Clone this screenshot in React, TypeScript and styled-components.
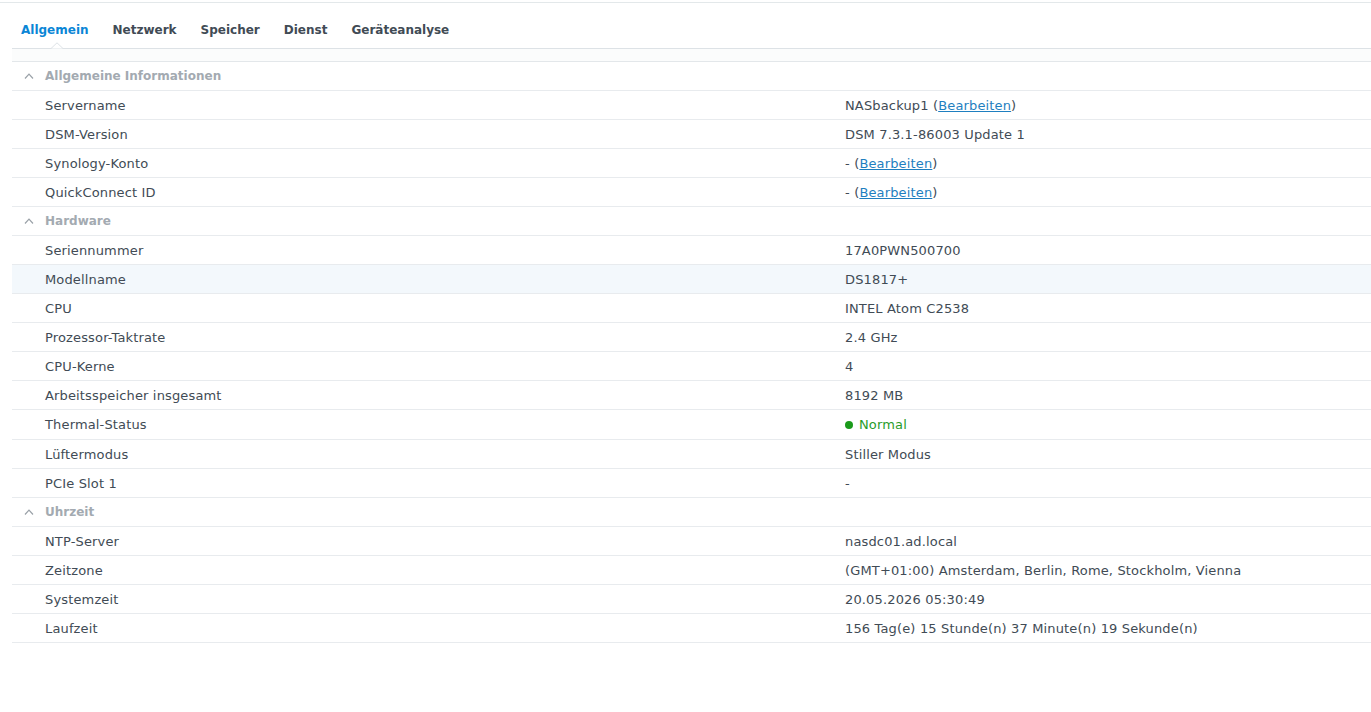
import React from "react";
import styled, { createGlobalStyle } from "styled-components";

const GlobalStyle = createGlobalStyle`
  html, body {
    margin: 0;
    padding: 0;
    background: #ffffff;
  }
  body {
    font-family: "DejaVu Sans", Verdana, sans-serif;
    font-size: 13px;
    letter-spacing: 0.15px;
    color: #414b55;
  }
`;

const Page = styled.div`
  width: 1371px;
  height: 712px;
  padding-top: 2px;
  box-sizing: border-box;
  overflow: hidden;
`;

const TopLine = styled.div`
  border-top: 1px solid #e3e8ea;
`;

const Content = styled.div`
  padding-left: 12px;
`;

const TabBar = styled.div`
  display: flex;
  border-bottom: 1px solid #dde2e6;
  height: 45px;
  box-sizing: content-box;
`;

const Tab = styled.div<{ $active?: boolean }>`
  position: relative;
  padding: 19px 12px 0 12px;
  line-height: 16px;
  font-weight: bold;
  font-size: 12px;
  letter-spacing: 0;
  color: ${(p) => (p.$active ? "#0a86d6" : "#414b55")};
  &:first-child {
    padding-left: 9px;
  }
`;

const Notch = styled.svg`
  position: absolute;
  left: 50%;
  bottom: -1px;
  margin-left: -5px;
`;

const Spacer = styled.div`
  height: 12px;
  background: #fbfcfc;
  border-bottom: 1px solid #e3e7ea;
`;

const Row = styled.div<{ $hover?: boolean; $tall?: boolean }>`
  display: grid;
  grid-template-columns: 833px 1fr;
  height: ${(p) => (p.$tall ? "29px" : "28px")};
  align-items: center;
  border-bottom: 1px solid #e8ebee;
  background: ${(p) => (p.$hover ? "#f3f8fc" : "transparent")};
`;

const Label = styled.div`
  padding-left: 33px;
  color: #414b55;
`;

const Value = styled.div`
  color: #414b55;
  display: flex;
  align-items: center;
`;

const SectionRow = styled.div`
  display: flex;
  align-items: center;
  height: 28px;
  border-bottom: 1px solid #e8ebee;
`;

const Chevron = styled.svg`
  margin-left: 12px;
  margin-right: 11px;
`;

const SectionTitle = styled.span`
  font-weight: bold;
  font-size: 12px;
  letter-spacing: 0;
  color: #a3aab1;
`;

const Link = styled.a`
  color: #1f7fc0;
  text-decoration: underline;
  cursor: pointer;
`;

const Paren = styled.span`
  color: #414b55;
`;

const StatusDot = styled.span`
  width: 8px;
  height: 8px;
  border-radius: 50%;
  background: #1b9a1b;
  margin-right: 6px;
`;

const StatusText = styled.span`
  color: #2a9c2a;
`;

type Item = {
  label: string;
  value: React.ReactNode;
  hover?: boolean;
  tall?: boolean;
};
type Section = { title: string; items: Item[] };

const Edit = ({ prefix }: { prefix: string }) => (
  <span>
    {prefix} <Paren>(</Paren>
    <Link>Bearbeiten</Link>
    <Paren>)</Paren>
  </span>
);

const sections: Section[] = [
  {
    title: "Allgemeine Informationen",
    items: [
      { label: "Servername", value: <Edit prefix="NASbackup1" /> },
      { label: "DSM-Version", value: "DSM 7.3.1-86003 Update 1" },
      { label: "Synology-Konto", value: <Edit prefix="-" /> },
      { label: "QuickConnect ID", value: <Edit prefix="-" /> },
    ],
  },
  {
    title: "Hardware",
    items: [
      { label: "Seriennummer", value: "17A0PWN500700" },
      { label: "Modellname", value: "DS1817+", hover: true },
      { label: "CPU", value: "INTEL Atom C2538" },
      { label: "Prozessor-Taktrate", value: "2.4 GHz" },
      { label: "CPU-Kerne", value: "4" },
      { label: "Arbeitsspeicher insgesamt", value: "8192 MB" },
      {
        label: "Thermal-Status",
        tall: true,
        value: (
          <>
            <StatusDot />
            <StatusText>Normal</StatusText>
          </>
        ),
      },
      { label: "Lüftermodus", value: "Stiller Modus" },
      { label: "PCIe Slot 1", value: "-" },
    ],
  },
  {
    title: "Uhrzeit",
    items: [
      { label: "NTP-Server", value: "nasdc01.ad.local" },
      {
        label: "Zeitzone",
        value: "(GMT+01:00) Amsterdam, Berlin, Rome, Stockholm, Vienna",
      },
      { label: "Systemzeit", value: "20.05.2026 05:30:49" },
      {
        label: "Laufzeit",
        value: "156 Tag(e) 15 Stunde(n) 37 Minute(n) 19 Sekunde(n)",
      },
    ],
  },
];

const tabs = ["Allgemein", "Netzwerk", "Speicher", "Dienst", "Geräteanalyse"];

export default function App() {
  return (
    <Page>
      <GlobalStyle />
      <TopLine />
      <Content>
        <TabBar>
          {tabs.map((t, i) => (
            <Tab key={t} $active={i === 0}>
              {t}
              {i === 0 && (
                <Notch width="12" height="7" viewBox="0 0 12 7">
                  <path d="M0 6.5 L6 0.8 L12 6.5 Z" fill="#ffffff" />
                  <path
                    d="M0 6.5 L6 0.8 L12 6.5"
                    fill="none"
                    stroke="#dde2e6"
                    strokeWidth="1"
                  />
                </Notch>
              )}
            </Tab>
          ))}
        </TabBar>
        <Spacer />
        {sections.map((s) => (
          <React.Fragment key={s.title}>
            <SectionRow>
              <Chevron width="10" height="6" viewBox="0 0 10 6">
                <path
                  d="M1 5.5 L5 1.2 L9 5.5"
                  fill="none"
                  stroke="#9aa1a8"
                  strokeWidth="1.2"
                />
              </Chevron>
              <SectionTitle>{s.title}</SectionTitle>
            </SectionRow>
            {s.items.map((it) => (
              <Row key={it.label} $hover={it.hover} $tall={it.tall}>
                <Label>{it.label}</Label>
                <Value>{it.value}</Value>
              </Row>
            ))}
          </React.Fragment>
        ))}
      </Content>
    </Page>
  );
}
